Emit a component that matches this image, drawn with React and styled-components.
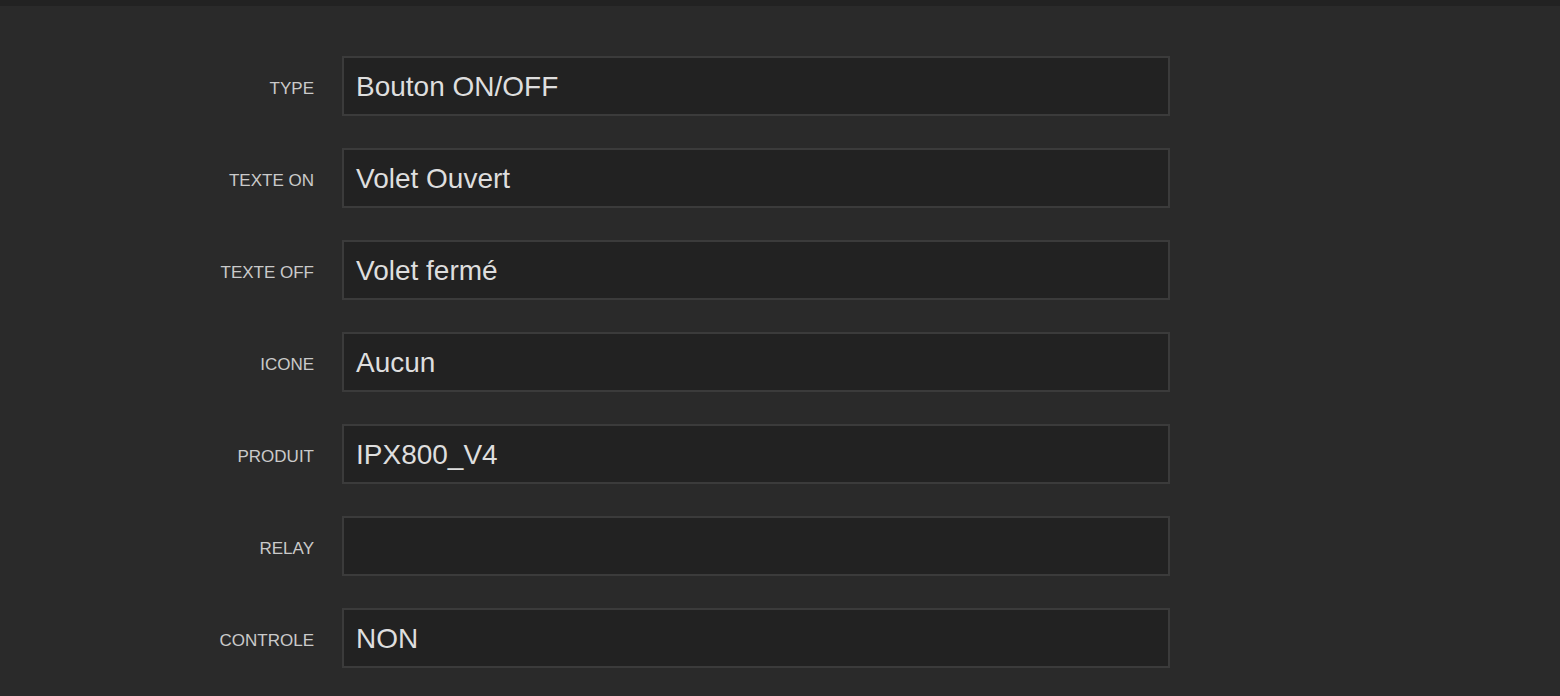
import React from 'react';
import styled, { createGlobalStyle } from 'styled-components';

const GlobalStyle = createGlobalStyle`
  html, body {
    margin: 0;
    padding: 0;
    background: #2a2a2a;
    font-family: "Liberation Sans", Arial, sans-serif;
  }
`;

const Page = styled.div`
  min-height: 696px;
  background: #2a2a2a;
`;

const TopBar = styled.div`
  height: 6px;
  background: #222222;
`;

const Form = styled.div`
  display: grid;
  grid-template-columns: 314px 828px;
  column-gap: 28px;
  row-gap: 32px;
  padding-top: 50px;
  align-items: center;
`;

const Label = styled.label`
  text-align: right;
  font-size: 17px;
  color: #cacaca;
  text-transform: uppercase;
  padding-top: 5px;
`;

const Field = styled.div`
  box-sizing: border-box;
  height: 60px;
  border: 2px solid #3b3b3b;
  background: #222222;
  padding: 2px 12px 0;
  display: flex;
  align-items: center;
  font-size: 28px;
  color: #dedede;
`;

const rows = [
  ['Type', 'Bouton ON/OFF'],
  ['Texte ON', 'Volet Ouvert'],
  ['Texte OFF', 'Volet fermé'],
  ['Icone', 'Aucun'],
  ['Produit', 'IPX800_V4'],
  ['Relay', ''],
  ['Controle', 'NON'],
];

export default function App() {
  return (
    <Page>
      <GlobalStyle />
      <TopBar />
      <Form>
        {rows.map(([label, value]) => (
          <React.Fragment key={label}>
            <Label>{label}</Label>
            <Field>{value}</Field>
          </React.Fragment>
        ))}
      </Form>
    </Page>
  );
}
